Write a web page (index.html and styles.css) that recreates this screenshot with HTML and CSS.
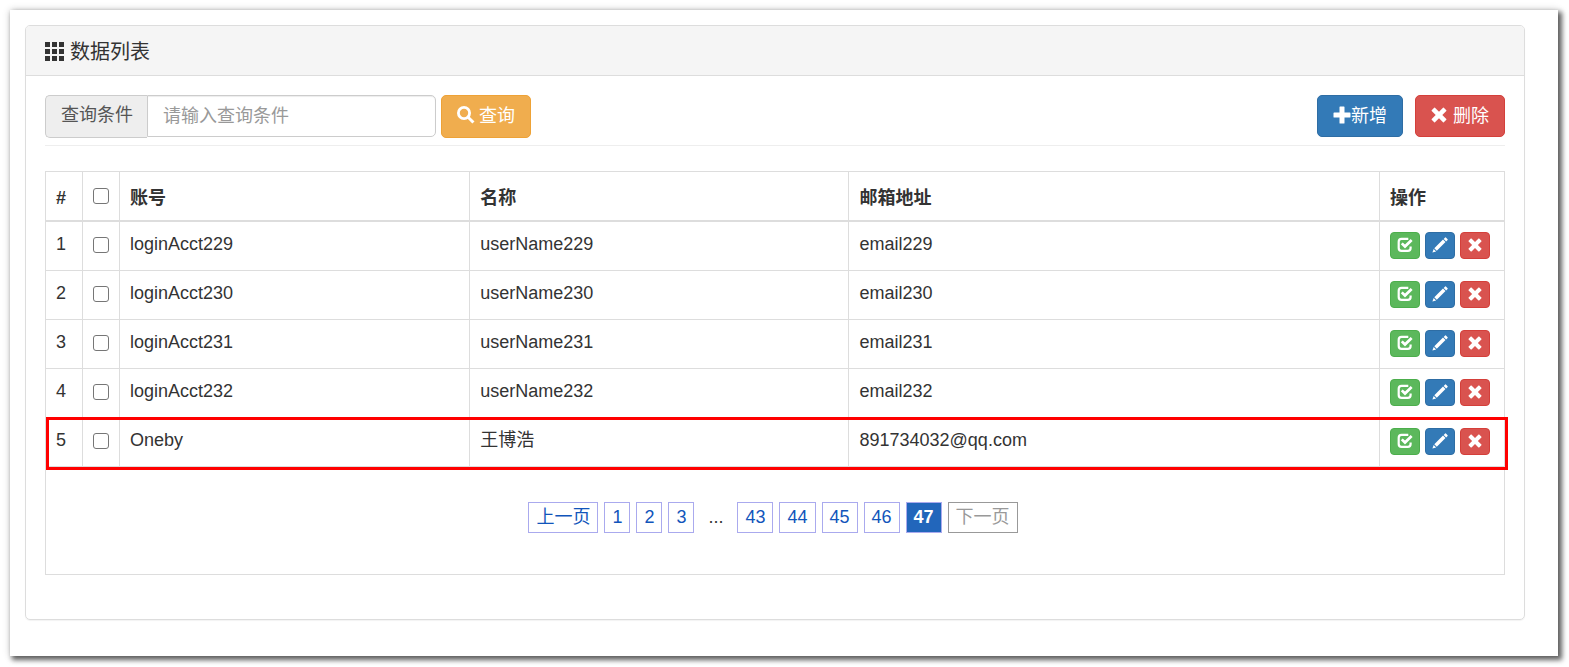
FILE: index.html
```html
<!DOCTYPE html>
<html lang="zh-CN">
<head>
<meta charset="utf-8">
<title>数据列表</title>
<link rel="stylesheet" href="styles.css">
</head>
<body>
<svg class="sprite" aria-hidden="true">
  <symbol id="i-th" viewBox="0 0 19 19"><path d="M0 0h5v5H0zM7 0h5v5H7zM14 0h5v5h-5zM0 7h5v5H0zM7 7h5v5H7zM14 7h5v5h-5zM0 14h5v5H0zM7 14h5v5H7zM14 14h5v5h-5z"/></symbol>
  <symbol id="i-search" viewBox="0 0 18 18"><circle cx="7" cy="7" r="5.6" fill="none" stroke="currentColor" stroke-width="2.8"/><path d="M10.2 12.2l2-2 5.3 5.2-2.2 2.2z"/></symbol>
  <symbol id="i-plus" viewBox="0 0 18 18"><path d="M6.500 1q0-.6.600-.6h3.800q.600 0 .600.600v5.400h5.300q.700 0 .700.700v3.800q0 .700-.700.700h-5.300V17q0 .600-.600.600H7.100q-.600 0-.600-.600v-5.400H1.200q-.700 0-.700-.700V7.100q0-.700.700-.700h5.300z"/></symbol>
  <symbol id="i-remove" viewBox="0 0 16 16"><path d="M4 .7L8 4.700l4-4q.4-.4.8 0l2.500 2.500q.4.400 0 .8l-4 4 4 4q.4.400 0 .8l-2.500 2.500q-.4.400-.8 0l-4-4-4 4q-.4.400-.8 0L.7 12.800q-.4-.4 0-.8l4-4-4-4q-.4-.4 0-.8L3.200.7q.4-.4.8 0z"/></symbol>
  <symbol id="i-check" viewBox="0 0 16 16"><path d="M11.300 1.900H4.500Q1.700 1.900 1.700 4.700v6.300q0 2.800 2.800 2.800h6.300q2.800 0 2.800-2.800V9.500" fill="none" stroke="currentColor" stroke-width="2.200"/><path d="M3.800 7.200l1.900-1.800 2.300 2.200 5.700-5.500L15.600 4 8 11.600z"/></symbol>
  <symbol id="i-pencil" viewBox="0 0 16 16"><path d="M13.100.5q.4-.4.8 0l1.700 1.700q.4.400 0 .8l-1.400 1.400-2.500-2.500zM11 2.600l2.500 2.500-8.700 8.700-2.500-2.500zM1.700 12l2.400 2.400-3.700 1.200z"/></symbol>
</svg>

<main class="frame">
  <section class="panel">
    <header class="panel-heading">
      <svg class="icon-th"><use href="#i-th"/></svg>
      <h1 class="panel-title">数据列表</h1>
    </header>
    <div class="panel-body">
      <div class="toolbar">
        <form class="search">
          <div class="input-group">
            <label class="addon" for="keyword">查询条件</label>
            <input class="field" id="keyword" type="text" placeholder="请输入查询条件">
          </div>
          <button class="btn btn-warning" type="button"><svg class="icon"><use href="#i-search"/></svg>查询</button>
        </form>
        <div class="actions">
          <button class="btn btn-primary btn-tight" type="button"><svg class="icon"><use href="#i-plus"/></svg>新增</button>
          <button class="btn btn-danger" type="button"><svg class="icon icon-remove"><use href="#i-remove"/></svg>删除</button>
        </div>
      </div>
      <table class="grid">
        <colgroup><col class="c-num"><col class="c-check"><col class="c-acct"><col class="c-name"><col class="c-mail"><col class="c-ops"></colgroup>
        <thead>
          <tr><th>#</th><th><input class="check" type="checkbox" aria-label="全选"></th><th>账号</th><th>名称</th><th>邮箱地址</th><th>操作</th></tr>
        </thead>
        <tbody>
          <tr><td>1</td><td><input class="check" type="checkbox" aria-label="选择 1"></td><td>loginAcct229</td><td>userName229</td><td>email229</td><td><div class="ops"><button class="btn-xs btn-success" type="button" aria-label="分配"><svg class="icon-xs"><use href="#i-check"/></svg></button><button class="btn-xs btn-primary" type="button" aria-label="编辑"><svg class="icon-xs"><use href="#i-pencil"/></svg></button><button class="btn-xs btn-danger" type="button" aria-label="删除"><svg class="icon-xs"><use href="#i-remove"/></svg></button></div></td></tr>
          <tr><td>2</td><td><input class="check" type="checkbox" aria-label="选择 2"></td><td>loginAcct230</td><td>userName230</td><td>email230</td><td><div class="ops"><button class="btn-xs btn-success" type="button" aria-label="分配"><svg class="icon-xs"><use href="#i-check"/></svg></button><button class="btn-xs btn-primary" type="button" aria-label="编辑"><svg class="icon-xs"><use href="#i-pencil"/></svg></button><button class="btn-xs btn-danger" type="button" aria-label="删除"><svg class="icon-xs"><use href="#i-remove"/></svg></button></div></td></tr>
          <tr><td>3</td><td><input class="check" type="checkbox" aria-label="选择 3"></td><td>loginAcct231</td><td>userName231</td><td>email231</td><td><div class="ops"><button class="btn-xs btn-success" type="button" aria-label="分配"><svg class="icon-xs"><use href="#i-check"/></svg></button><button class="btn-xs btn-primary" type="button" aria-label="编辑"><svg class="icon-xs"><use href="#i-pencil"/></svg></button><button class="btn-xs btn-danger" type="button" aria-label="删除"><svg class="icon-xs"><use href="#i-remove"/></svg></button></div></td></tr>
          <tr><td>4</td><td><input class="check" type="checkbox" aria-label="选择 4"></td><td>loginAcct232</td><td>userName232</td><td>email232</td><td><div class="ops"><button class="btn-xs btn-success" type="button" aria-label="分配"><svg class="icon-xs"><use href="#i-check"/></svg></button><button class="btn-xs btn-primary" type="button" aria-label="编辑"><svg class="icon-xs"><use href="#i-pencil"/></svg></button><button class="btn-xs btn-danger" type="button" aria-label="删除"><svg class="icon-xs"><use href="#i-remove"/></svg></button></div></td></tr>
          <tr class="marked"><td>5<span class="mark"></span></td><td><input class="check" type="checkbox" aria-label="选择 5"></td><td>Oneby</td><td>王博浩</td><td>891734032@qq.com</td><td><div class="ops"><button class="btn-xs btn-success" type="button" aria-label="分配"><svg class="icon-xs"><use href="#i-check"/></svg></button><button class="btn-xs btn-primary" type="button" aria-label="编辑"><svg class="icon-xs"><use href="#i-pencil"/></svg></button><button class="btn-xs btn-danger" type="button" aria-label="删除"><svg class="icon-xs"><use href="#i-remove"/></svg></button></div></td></tr>
        </tbody>
        <tfoot>
          <tr><td class="foot" colspan="6">
            <nav class="pages" aria-label="分页">
              <a class="page" href="#">上一页</a><a class="page" href="#">1</a><a class="page" href="#">2</a><a class="page" href="#">3</a><span class="page page-gap">...</span><a class="page" href="#">43</a><a class="page" href="#">44</a><a class="page" href="#">45</a><a class="page" href="#">46</a><span class="page page-current">47</span><span class="page page-off">下一页</span>
            </nav>
          </td></tr>
        </tfoot>
      </table>
    </div>
  </section>
</main>
</body>
</html>
```
FILE: styles.css
```css
* { box-sizing: border-box; }

body {
  margin: 0;
  background: #fff;
  color: #333;
  font: 18px/25px "Liberation Sans", "Noto Sans CJK SC", sans-serif;
}

button, input { font: inherit; }

.sprite { position: absolute; width: 0; height: 0; }

.frame {
  margin: 10px 11px 10px 10px;
  padding: 15px 33px 36px 15px;
  background: #fff;
  box-shadow: 3px 3px 5px 1px rgba(0, 0, 0, 0.6), 0 0 8px rgba(0, 0, 0, 0.16);
}

.panel {
  border: 1px solid #ddd;
  border-radius: 5px;
  box-shadow: 0 1px 1px rgba(0, 0, 0, 0.05);
}

.panel-heading {
  display: flex;
  align-items: center;
  gap: 6px;
  height: 50px;
  padding: 1px 19px 0;
  border-bottom: 1px solid #ddd;
  border-radius: 4px 4px 0 0;
  background: #f5f5f5;
}

.panel-title { margin: 0; padding-top: 2px; font-size: 20px; font-weight: 400; }

.icon { width: 18px; height: 18px; margin-bottom: 3px; flex: none; fill: currentColor; }
.icon-th { width: 19px; height: 19px; flex: none; fill: currentColor; }
.icon-remove { width: 16px; height: 16px; }

.panel-body { padding: 19px 19px 44px; }

.toolbar {
  display: flex;
  justify-content: space-between;
  align-items: flex-start;
  height: 51px;
  margin-bottom: 25px;
  border-bottom: 1px solid #eee;
}

.search { display: flex; gap: 5px; }
.actions { display: flex; gap: 12px; }
.input-group { display: flex; }

.addon {
  height: 43px;
  padding: 7px 14px 7px 15px;
  border: 1px solid #ccc;
  border-right: 0;
  border-radius: 5px 0 0 5px;
  background: #eee;
  color: #555;
}

.field {
  width: 289px;
  height: 42px;
  padding: 0 15px;
  border: 1px solid #ccc;
  border-radius: 0 5px 5px 0;
  box-shadow: inset 0 1px 1px rgba(0, 0, 0, 0.075);
  color: #555;
}

.field::placeholder { color: #999; }

.btn {
  display: flex;
  align-items: center;
  gap: 4px;
  height: 42px;
  padding: 0 15px;
  border: 1px solid;
  border-radius: 5px;
  color: #fff;
}

.btn-xs {
  display: flex;
  align-items: center;
  justify-content: center;
  width: 30px;
  height: 27px;
  padding: 0;
  border: 1px solid;
  border-radius: 4px;
  color: #fff;
}

.search .btn { height: 43px; }
.btn-tight { gap: 0; }
.btn-danger { gap: 6px; }
.btn-warning { background: #f0ad4e; border-color: #eea236; }
.btn-primary { background: #337ab7; border-color: #2e6da4; }
.btn-danger { background: #d9534f; border-color: #d43f3a; }
.btn-success { background: #5cb85c; border-color: #4cae4c; }

.grid {
  width: 100%;
  border-collapse: collapse;
  table-layout: fixed;
  border: 1px solid #ddd;
}

.c-num, .c-check { width: 37px; }
.c-acct { width: 24%; }
.c-name { width: 26%; }
.c-ops { width: 125px; }

th, td { padding: 10px; border: 1px solid #ddd; text-align: left; }
th { height: 49px; padding-bottom: 9px; border-bottom-width: 2px; vertical-align: bottom; }
td { height: 49px; vertical-align: top; }

.check {
  display: block;
  width: 16px;
  height: 16px;
  margin: 5px 0 7px;
  border: 1px solid #767676;
  border-radius: 3px;
  background: #fff;
  appearance: none;
}

.check:checked { background: #337ab7; }

.ops { display: flex; gap: 5px; }

.icon-xs { width: 16px; height: 16px; margin-bottom: 1px; fill: currentColor; }
.btn-danger .icon-xs { width: 14px; height: 14px; }

.marked { position: relative; }

.mark {
  position: absolute;
  inset: 0 -3px -4px 0;
  border: 3px solid #f00;
  pointer-events: none;
}

.foot { height: 108px; padding: 35px 14px 41px 10px; }

.pages { display: flex; justify-content: center; gap: 6px; }

.page {
  padding: 2px 7px;
  border: 1px solid #aaaaee;
  color: #1155bb;
  text-decoration: none;
}

.page-gap { border-color: transparent; color: #333; }
.page-current { background: #2266bb; color: #fff; font-weight: 700; }
.page-off { border-color: #999; color: #999; }
```
